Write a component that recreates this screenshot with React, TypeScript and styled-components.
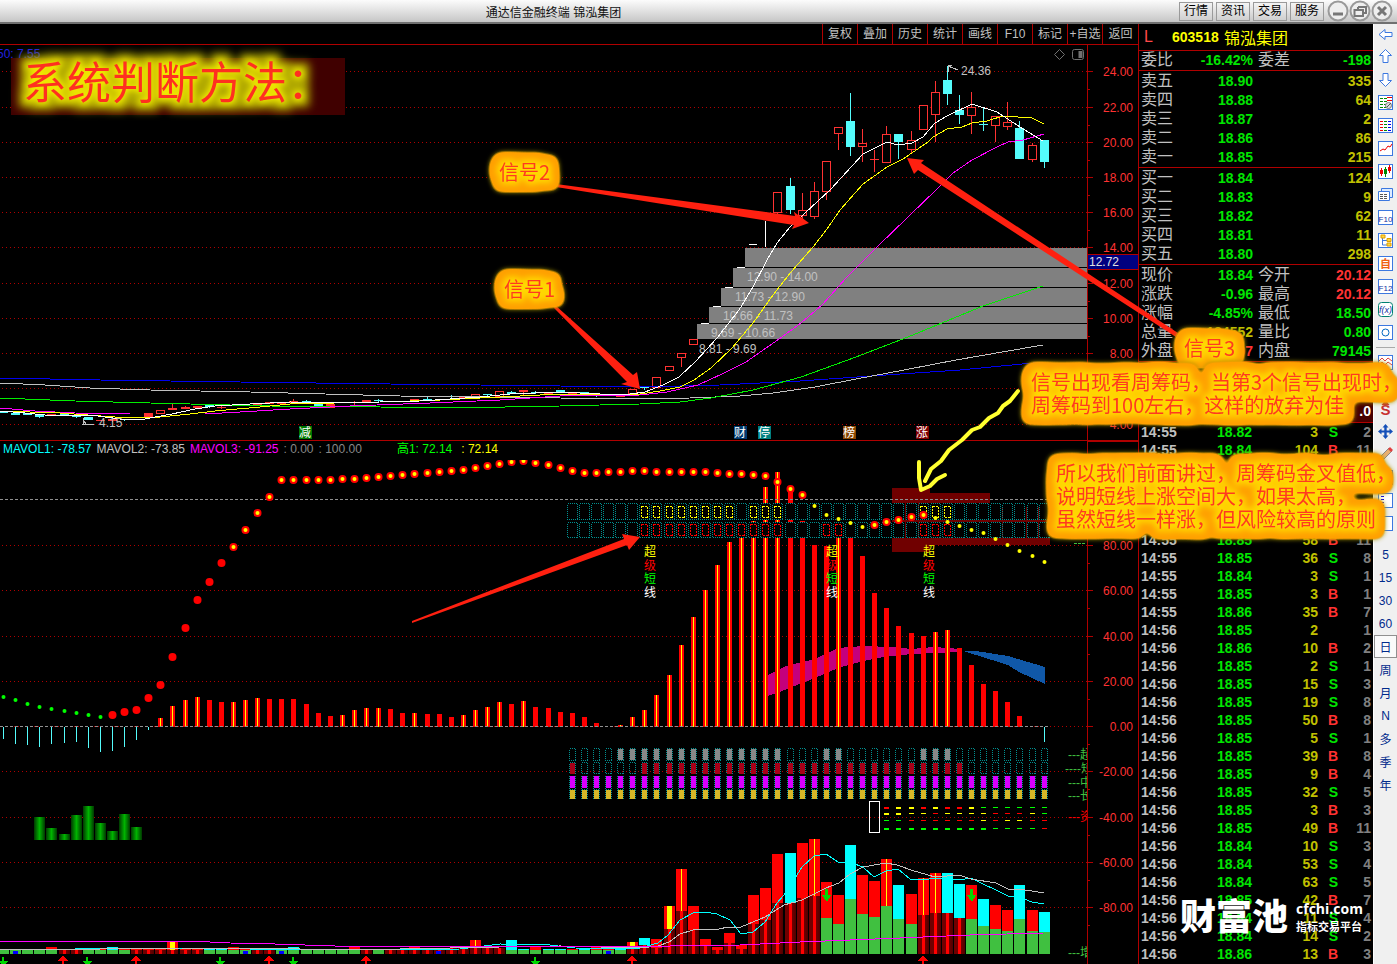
import React from "react";
import styled, { createGlobalStyle } from "styled-components";

const RED = "#b00000";
const UP = "#ff3232";
const DOWN = "#54fcfc";
const GREEN = "#00e600";
const OLIVE = "#c0c000";
const SILVER = "#c0c0c0";

const Global = createGlobalStyle`
  * { box-sizing: border-box; }
  body { margin: 0; background: #000; overflow-x: hidden; }
  button { font: inherit; padding: 0; margin: 0; cursor: default; }
`;

const Page = styled.div`
  position: relative;
  overflow: hidden;
  background: #000;
  color: ${SILVER};
  font: 12px "Liberation Sans", "Noto Sans CJK SC", sans-serif;
`;

const Header = styled.header`
  display: flex;
  align-items: center;
  height: 24px;
  padding: 0 4px 0 0;
  background: linear-gradient(#fcfcfc, #c6c6c6);
  border-bottom: 2px solid #707070;
  color: #111;
`;
const Caption = styled.h1`
  flex: 1;
  margin: 0;
  padding-right: 72px;
  text-align: center;
  font-size: 12px;
  font-weight: 400;
`;
const HeaderButtons = styled.div`
  display: flex;
  gap: 3px;
  margin-right: 3px;
`;
const HeaderButton = styled.button`
  width: 34px;
  height: 19px;
  border: 1px solid #9a9a9a;
  background: linear-gradient(#f4f4f4, #cfcfcf);
  line-height: 17px;
`;
const RoundButton = styled.button`
  width: 22px;
  height: 22px;
  border: 0;
  background: none;
  svg { display: block; }
`;

const Body = styled.main`
  display: flex;
  align-items: stretch;
`;
const Charts = styled.section`
  flex: 1;
  min-width: 0;
  svg { display: block; width: 100%; height: auto; }
`;
const Toolbar = styled.nav`
  display: flex;
  justify-content: flex-end;
  height: 21px;
  border-bottom: 1px solid ${RED};
`;
const ToolButton = styled.button<{ $wide?: boolean }>`
  width: ${(p) => (p.$wide ? 36 : 35)}px;
  border: 0;
  border-left: 1px solid ${RED};
  background: none;
  color: ${SILVER};
  line-height: 19px;
  white-space: nowrap;
`;
const Legend = styled.div`
  display: flex;
  height: 19px;
  border-top: 1px solid ${RED};
`;
const LegendItems = styled.div`
  display: flex;
  flex: 1;
  gap: 5px;
  padding-left: 3px;
  line-height: 17px;
  white-space: nowrap;
`;
const LegendItem = styled.span<{ $c: string; $gap?: number }>`
  color: ${(p) => p.$c};
  margin-left: ${(p) => p.$gap || 0}px;
`;
const AxisCap = styled.div`
  width: 51px;
  border: solid ${RED};
  border-width: 1px 0 0 1px;
`;

const Quotes = styled.aside`
  position: relative;
  width: 235px;
  border-left: 1px solid ${RED};
  font-size: 16px;
`;
const Stock = styled.div`
  display: flex;
  align-items: center;
  height: 26px;
  padding-left: 5px;
  color: #ff0;
  b { width: 28px; color: #ff4848; font-weight: 400; }
  strong { width: 52px; font-size: 14px; }
`;
const Group = styled.div<{ $tight?: boolean }>`
  border-top: 1px solid ${RED};
  padding-top: ${(p) => (p.$tight ? 0 : 1)}px;
`;
const QuoteRow = styled.div`
  display: grid;
  grid-template-columns: 34px 78px 38px 1fr;
  height: 19px;
  line-height: 18px;
  padding: 0 2px;
  white-space: nowrap;
  span:nth-child(3) { padding-left: 5px; }
`;
const Num = styled.b<{ $c: string }>`
  color: ${(p) => p.$c};
  font-size: 14px;
  text-align: right;
`;
const LargeRow = styled.div`
  height: 21px;
  margin-top: 38px;
  padding-right: 2px;
  background: #480000;
  color: #fff;
  text-align: right;
  font: bold 14px/20px "Liberation Sans", sans-serif;
`;
const Trades = styled.table`
  width: 100%;
  border-top: 1px solid ${RED};
  border-collapse: collapse;
  table-layout: fixed;
  font-size: 14px;
  font-weight: 700;
  td { height: 18px; padding: 0 2px; line-height: 18px; text-align: right; }
  td:first-child { text-align: left; }
`;
const Cell = styled.td<{ $c: string }>`
  color: ${(p) => p.$c};
`;
const Watermark = styled.div`
  position: absolute;
  left: 41px;
  bottom: 28px;
  display: flex;
  align-items: center;
  gap: 8px;
  color: #fff;
  font: 900 36px/44px "Noto Sans CJK SC", sans-serif;
  white-space: nowrap;
`;
const WatermarkSide = styled.div`
  padding-top: 5px;
  font: bold 11px/16px "Noto Sans CJK SC", sans-serif;
  div { font: bold 14px/18px "Open Sans", sans-serif; }
`;

const Side = styled.aside`
  width: 24px;
  background: #f0f0f0;
  border-left: 1px solid #fff;
  color: #002a8c;
`;
const SideButton = styled.button<{ $on?: boolean; $first?: boolean }>`
  display: flex;
  align-items: center;
  justify-content: center;
  width: 23px;
  height: ${(p) => (p.$first ? 21 : 23)}px;
  border: ${(p) => (p.$on ? "1px solid #909090" : "0")};
  background: ${(p) => (p.$on ? "#fafafa" : "none")};
  color: inherit;
`;
const Divider = styled.hr`
  height: 4px;
  margin: 0 2px 3px;
  border: 0;
  border-bottom: 1px solid #aaa;
`;
const Spacer = styled.div`
  height: 8px;
`;

const Overlay = styled.svg`
  position: absolute;
  left: 0;
  top: 0;
  width: 100%;
  pointer-events: none;
`;
const Note = styled.p<{ $x: number; $y: number }>`
  position: absolute;
  left: ${(p) => p.$x}px;
  top: ${(p) => p.$y}px;
  margin: 0;
  color: #ff3a20;
  font: 20px/23px "Noto Sans CJK SC", sans-serif;
  white-space: pre;
  filter: url(#bubble);
`;
const Banner = styled.div`
  position: absolute;
  left: 11px;
  top: 58px;
  width: 334px;
  height: 57px;
  background: #400000;
`;
const BannerText = styled.h2`
  margin: 0;
  padding-left: 12px;
  color: #ff3020;
  font: 400 44px/44px "Noto Sans CJK SC", sans-serif;
  white-space: nowrap;
  filter: url(#halo);
`;

const bx = (i: number) => Math.round(3 + 12.1 * i);
const seq = (a: number, b: number) => Array.from({ length: b - a + 1 }, (_, k) => a + k);

/* index, colour, body top, body bottom, wick top, wick bottom */
const candles: [number, "u" | "d" | "f", number, number, number, number][] = [
  [0, "d", 411, 413, 411, 413], [1, "d", 413, 415, 413, 415], [2, "d", 413, 415, 413, 415], [3, "d", 415, 417, 415, 418],
  [4, "f", 414, 416, 414, 416], [5, "d", 414, 415, 413, 415], [6, "d", 416, 417, 415, 418], [7, "d", 417, 420, 417, 420],
  [8, "f", 420, 421, 420, 421], [9, "f", 419, 421, 419, 422], [10, "d", 419, 420, 419, 421], [11, "f", 417, 418, 417, 418],
  [12, "f", 413, 417, 413, 417], [13, "u", 410, 413, 410, 414], [14, "f", 408, 410, 404, 410], [15, "f", 407, 409, 406, 409],
  [16, "f", 406, 408, 406, 408], [17, "d", 405, 407, 404, 408], [18, "f", 407, 408, 406, 409], [20, "f", 404, 405, 404, 405],
  [21, "f", 403, 405, 403, 405], [22, "f", 402, 404, 402, 404], [23, "f", 402, 404, 402, 404], [24, "f", 401, 403, 399, 403],
  [25, "d", 401, 404, 400, 404], [26, "d", 404, 406, 404, 406], [27, "f", 404, 408, 404, 408], [29, "f", 402, 403, 401, 405],
  [30, "f", 400, 402, 400, 402], [31, "d", 400, 401, 399, 402], [34, "f", 399, 401, 399, 401], [35, "d", 399, 400, 397, 400],
  [37, "d", 399, 400, 395, 400], [38, "f", 397, 399, 397, 399], [39, "u", 394, 397, 394, 398], [40, "d", 394, 395, 394, 397],
  [41, "u", 391, 396, 391, 396], [42, "d", 392, 394, 391, 394], [43, "f", 390, 392, 390, 395], [44, "d", 392, 393, 391, 394],
  [45, "f", 392, 394, 392, 394], [46, "d", 390, 393, 390, 393], [47, "f", 393, 395, 393, 395], [48, "d", 392, 395, 392, 395],
  [49, "d", 394, 396, 394, 397], [50, "f", 394, 396, 394, 396], [51, "f", 395, 397, 395, 397], [52, "u", 389, 393, 389, 393],
  [53, "d", 387, 388, 387, 390], [54, "u", 377, 387, 377, 388], [55, "u", 366, 370, 366, 370], [56, "u", 353, 357, 353, 367],
  [57, "u", 339, 344, 339, 344], [64, "u", 192, 212, 192, 215], [65, "d", 186, 210, 178, 214], [66, "u", 210, 215, 193, 219],
  [67, "u", 191, 216, 182, 219], [68, "u", 161, 191, 161, 200], [69, "u", 127, 133, 127, 150], [70, "d", 121, 147, 93, 156],
  [71, "u", 143, 146, 129, 162], [72, "f", 159, 160, 150, 172], [73, "u", 134, 162, 126, 163], [74, "d", 134, 142, 134, 159],
  [75, "u", 140, 149, 131, 153], [76, "u", 105, 129, 105, 130], [77, "u", 92, 114, 81, 142], [78, "d", 80, 94, 66, 105],
  [79, "d", 110, 115, 95, 124], [80, "u", 107, 115, 92, 134], [81, "d", 124, 125, 107, 131], [82, "u", 116, 125, 116, 142],
  [83, "u", 122, 126, 102, 130], [84, "d", 128, 159, 121, 159], [85, "u", 145, 159, 143, 162], [86, "d", 140, 162, 140, 168],
];

const priceLines: [string, string][] = [
  ["#00e", "0,378 100,380 240,382 390,384 480,385 560,386 640,387 720,385 800,381 900,374 960,370 1043,362"],
  [SILVER, "0,383 45,385 90,388 150,390 250,392 400,396 560,398 640,399 690,398 740,396 773,393 815,387 856,379 904,370 956,360 1008,351 1043,345"],
  ["#0e0", "0,398 75,401 150,403 270,406 380,407 450,408 560,406 640,404 680,402 711,398 753,390 801,377 856,357 908,337 983,306 1043,286"],
  ["#f0f", "0,408 35,411 75,413 130,414 205,414 240,412 290,409 350,406 430,403 500,400 560,396 640,395 667,392 698,385 722,374 746,362 779,339 801,323 822,305 846,278 877,247 908,217 937,189 953,173 972,160 997,147 1008,142 1023,140 1044,134"],
  ["#ff0", "0,411 60,413 115,417 160,417 190,414 215,411 260,407 290,404 380,402 440,400 500,397 560,394 640,394 660,391 680,387 694,380 711,368 732,348 753,323 773,295 791,272 813,247 827,229 840,210 863,184 887,167 903,159 928,142 933,137 947,129 962,127 972,123 987,121 1003,116 1032,118 1044,124"],
  ["#fff", "0,411 25,413 45,415 90,415 120,419 145,419 155,417 172,414 195,409 215,406 250,404 290,402 330,403 380,402 420,401 480,397 510,394 560,392 600,394 630,394 645,392 663,385 679,377 696,361 717,338 739,310 753,287 767,260 777,243 790,227 805,213 830,190 863,154 887,142 898,145 912,143 923,137 935,123 947,116 972,104 997,112 1020,127 1043,141"],
];

const bands: [number, number, number, string][] = [
  [745, 248, 19, "12.90 - 14.00"], [733, 268, 19, "11.73 - 12.90"], [721, 288, 18, "10.66 - 11.73"],
  [709, 307, 16, "9.69 - 10.66"], [697, 324, 15, "8.81 - 9.69"],
];
const bandLabelY = [281, 301, 320, 337, 353];
const badges: [number, string, string][] = [
  [305, "减", "#007800"], [740, "财", "#003a70"], [764, "停", "#008080"], [849, "榜", "#8a4600"], [922, "涨", "#800000"],
];

function Grid({ ys }: { ys: number[] }) {
  return <>{ys.map((y) => <line key={y} x1="2" x2="1087" y1={y + 0.5} y2={y + 0.5} stroke={RED} strokeDasharray="1 3" />)}</>;
}
function Axis({ items, from, to }: { items: [number, string][]; from: number; to: number }) {
  return (
    <>
      <line x1="1087.5" x2="1087.5" y1={from} y2={to} stroke={RED} />
      {items.map(([y, t]) => (
        <g key={t}>
          <path d={`M1088 ${y + 0.5}h5M1088 ${y + 18.5}h2`} stroke={RED} />
          <text x="1133" y={y + 5} textAnchor="end" fill={UP}>{t}</text>
        </g>
      ))}
    </>
  );
}

function PriceChart() {
  const ticks: [number, string][] = [71, 107, 142, 177, 212, 247, 283, 318, 353, 388, 424].map((y, k) => [y, (24 - 2 * k).toFixed(2)]);
  return (
    <svg viewBox="0 45 1138 395" fontSize="12" shapeRendering="crispEdges">
      <Grid ys={ticks.map((t) => t[0])} />
      <Axis items={ticks} from={45} to={440} />
      {bands.map(([x, y, h]) => <rect key={x} x={x} y={y} width={1087 - x} height={h} fill="#808080" />)}
      {bands.map(([x, , , t], k) => <text key={t} x={x + 2} y={bandLabelY[k]} fill={SILVER}>{t}</text>)}
      {candles.map(([i, k, t, b, wt, wb]) => {
        const x = bx(i);
        const c = k === "d" ? DOWN : UP;
        return (
          <g key={i} fill={c}>
            {wt < t && <rect x={x} y={wt} width="1" height={t - wt} />}
            {wb > b && <rect x={x} y={b} width="1" height={wb - b} />}
            {k === "u"
              ? <rect x={x - 3.5} y={t + 0.5} width="8" height={b - t} fill="#000" stroke={c} />
              : <rect x={x - 4} y={t} width="9" height={b - t} />}
          </g>
        );
      })}
      <path d="M765.5 221V247M749 244.5h8M737 267.5h8M725 287.5h8M713 306.5h8M701 323.5h8" stroke="#fff" />
      {priceLines.map(([c, p]) => <polyline key={c} points={p} fill="none" stroke={c} />)}
      <path d="M948 72V65h4M948 66l10 4M82 424h12M83 424v-6M83 420l4 5" stroke={SILVER} fill="none" />
      <text x="961" y="75" fill={SILVER}>24.36</text>
      <text x="99" y="427" fill={SILVER}>4.15</text>
      <text x="-3" y="58" fill="#2020e0">50: 7.55</text>
      {badges.map(([x, t, c]) => (
        <g key={t}>
          <rect x={x - 6} y="426" width="13" height="13" fill={c} />
          <text x={x} y="437" textAnchor="middle" fill="#fff">{t}</text>
        </g>
      ))}
      <g fill="none" stroke="#707070" shapeRendering="auto">
        <path d="M1059.500 49.500l5 5-5 5-5-5z" />
        <rect x="1072.500" y="49.500" width="11" height="10" rx="2" />
        <path d="M1080.500 51v7" strokeWidth="4" />
      </g>
      <rect x="1088" y="254" width="50" height="16" fill="#000080" />
      <path d="M1088 254.500h50M1088 269.500h50" stroke={RED} />
      <text x="1089" y="266" fill="#e0e0e0">12.72</text>
    </svg>
  );
}

const hist = [739, 744, 745, 747, 744, 743, 742, 748, 752, 751, 747, 740, 730, 718, 706, 700, 697, 700, 702, 702, 700, 698, 699, 699, 699, 704, 713, 716, 715, 710, 708, 708, 709, 713, 713, 714, 714, 717, 715, 710, 707, 702, 704, 701, 707, 708, 712, 713, 717, 723, 727, 725, 717, 710, 695, 675, 645, 617, 590, 565, 542, 537, 521, 487, 472, 489, 521, 545, 546, 537, 538, 556, 593, 608, 626, 633, 636, 632, 630, 648, 665, 684, 691, 702, 716, 727, 742];
const rising = new Set([13, 14, 15, 16, 19, 20, 21, 28, 29, 30, 31, 34, 38, 39, 40, 41, 43, ...seq(51, 64), 69, 77, 78]);
const dots = [697, 700, 704, 707, 709, 711, 713, 715, 717, 715, 712, 710, 698, 685, 657, 628, 600, 582, 563, 547, 530, 513, 497, 480, 480, 480, 480, 480, 479, 479, 478, 477, 476, 475, 474, 473, 472, 471, 470, 468, 466, 464, 462, 461, 463, 465, 468, 471, 473, 473, 472, 472, 471, 471, 472, 472, 472, 472, 472, 473, 474, 474, 475, 476, 482, 489, 495, 506, 515, 519, 523, 527, 525, 522, 520, 517, 515, 518, 522, 526, 530, 533, 539, 545, 551, 556, 562];
const active = [...seq(53, 60), 62, 63, 64, 76, 77, 78];
const activeLow = [...seq(53, 64), 68, 69, 76, 77, 78];
const greyCells = new Set([...seq(51, 64), 68, 69, 76, 77, 78]);

/* index, body colour, top, lower part colour (d = dark red, g = green), lower part top, yellow mark width */
const vols: [number, "r" | "c", number, "d" | "g", number, number?][] = [
  [52, "r", 942, "d", 948, 5], [53, "c", 938, "d", 945], [54, "r", 939, "d", 948], [55, "r", 906, "d", 929, 5], [56, "r", 869, "d", 911, 1],
  [57, "r", 906, "d", 930], [58, "r", 939, "d", 946], [59, "r", 947, "d", 950], [60, "r", 933, "d", 943], [61, "r", 945, "d", 949],
  [62, "r", 895, "d", 924], [63, "r", 888, "d", 920], [64, "r", 854, "d", 903], [65, "c", 853, "d", 903], [66, "r", 843, "d", 898],
  [67, "r", 839, "d", 896, 1], [68, "r", 882, "g", 918], [69, "r", 895, "g", 924], [70, "c", 845, "g", 899], [71, "r", 875, "g", 914],
  [72, "r", 881, "g", 917], [73, "r", 859, "g", 906, 1], [74, "c", 885, "g", 919], [75, "r", 894, "g", 924], [76, "r", 878, "d", 915, 1],
  [77, "r", 873, "d", 913, 1], [78, "c", 873, "d", 913], [79, "c", 884, "d", 918], [80, "r", 885, "g", 919], [81, "c", 899, "g", 926],
  [82, "r", 905, "g", 929], [83, "r", 910, "g", 931], [84, "c", 885, "g", 919], [85, "r", 910, "g", 931], [86, "c", 912, "g", 932],
];
const lowKinds = "ggcggddggggddddddcgggddgggggggdcddddddddddccggcgcggg";
lowKinds.split("").forEach((k, i) => {
  const tall = i === 14 ? 942 : i === 39 || i === 42 ? 940 : i % 5 === 4 ? 947 : 949;
  vols.push([i, k === "c" || (k === "g" && i % 3 === 0) || i === 42 ? "c" : "r", tall, k === "d" ? "d" : "g", i > 36 && k === "d" ? 948 : 950, i === 14 ? 5 : i === 39 ? 1 : undefined]);
});

const dashRows: [number, string][] = [[808, "RYYRYRRYGGGGGG"], [814, "YYYYRYYYYRRRYG"], [821, "GGRRRRRRYRYYRR"], [829, "GGGGGGGGGGGGGR"]];
const dashColor: Record<string, string> = { R: "#f00", Y: "#ff0", G: "#0f0" };
const stacks = [650, 832, 929];
const stackText: [string, string, number][] = [["超", "#ff0", 556], ["级", "#f00", 570], ["短", "#0f0", 583], ["线", "#fff", 597]];
const greens = [817, 828, 834, 815, 806, 823, 831, 814, 827];
const tags: [number, string, string][] = [[759, "---超", "#40c040"], [773, "----短", "#40c040"], [787, "---中", "#40c040"], [800, "---长", "#40c040"], [821, "---资", "#f00"], [957, "---增", "#40c040"]];

function Dot({ i, y }: { i: number; y: number }) {
  const x = bx(i) + 0.5;
  const small = i < 9 || (i > 66 && i < 72) || i > 76;
  if (small) return <circle cx={x} cy={y} r="2" fill={i < 9 ? "#0f0" : "#ff0"} />;
  return (
    <>
      <circle cx={x} cy={y} r="4" fill="#f00" />
      {i > 18 && <circle cx={x} cy={y} r="2" fill="#ff0" />}
    </>
  );
}

function IndicatorChart() {
  const ticks: [number, string][] = [545, 590, 636, 681, 726, 771, 817, 862, 907].map((y, k) => [y, (80 - 20 * k).toFixed(2)]);
  return (
    <svg viewBox="0 459 1138 505" fontSize="12" shapeRendering="crispEdges">
      <defs>
        <linearGradient id="darkBar">
          <stop offset="0" stopColor="#700000" /><stop offset=".38" stopColor="#700000" /><stop offset=".38" stopColor="#f00" />
          <stop offset=".65" stopColor="#f00" /><stop offset=".65" stopColor="#700000" /><stop offset="1" stopColor="#500000" />
        </linearGradient>
        <linearGradient id="greenBar">
          <stop offset="0" stopColor="#003800" /><stop offset=".5" stopColor="#00b400" /><stop offset="1" stopColor="#003800" />
        </linearGradient>
        <clipPath id="plot"><rect x="0" y="460" width="1087" height="504" /></clipPath>
      </defs>
      <Grid ys={ticks.map((t) => t[0])} />
      <Axis items={ticks} from={459} to={964} />
      <g clipPath="url(#plot)">
        <path d="M768 675L786 666 815 659 838 648 863 646 893 647 911 649 934 647 961 649V652L911 654 884 657 863 661 838 668 815 678 782 691 768 696z" fill="#c4007c" />
        <path d="M963 651L976 651 1008 656 1045 667V684L1019 672 1008 665 976 655z" fill="#1058a8" />
        {hist.map((y, i) => {
          const x = bx(i);
          if (y === 727) return null;
          if (i < 13 || i === 86) return <rect key={i} x={x} y="727" width="1" height={y - 727} fill={DOWN} />;
          return (
            <g key={i}>
              <rect x={x - 2} y={y} width="5" height={727 - y} fill="#f00" />
              {rising.has(i) && <rect x={x} y={y} width="1" height={727 - y} fill="#ff0" />}
            </g>
          );
        })}
        <path d="M892 488h38v5h60v27h60v25h-120v7h-38z" fill="#700000" />
        <rect x="567" y="503" width="483" height="17" fill="#000" />
        <rect x="567" y="522" width="483" height="16" fill="#000" />
        <path d="M905.500 503v35M918.500 503v35M1002.500 507v31M1026.500 507v31M1038.500 507v31" stroke="#700000" />
        {seq(47, 86).map((i) => (
          <g key={i} fill="none" stroke="#009090" strokeDasharray="1 1">
            <rect x={bx(i) - 4.5} y="503.500" width="10" height="16" />
            <rect x={bx(i) - 4.5} y="522.500" width="10" height="15" />
          </g>
        ))}
        {active.map((i) => <rect key={i} x={bx(i) - 2.5} y="506.500" width="6" height="11" fill="none" stroke="#ff0" strokeDasharray="2 1" />)}
        {activeLow.map((i) => <rect key={i} x={bx(i) - 2.5} y="524.500" width="6" height="11" fill="none" stroke="#f00" strokeDasharray="2 1" />)}
        <path d="M765.500 487v16M777.500 472v31" stroke="#f00" strokeWidth="5" />
        <path d="M765.500 487v16M777.500 472v31" stroke="#ff0" />
        <path d="M0 499.500H1050M0 726.500H1050" stroke="#909090" strokeDasharray="3 2" />
        <g shapeRendering="auto">{dots.map((y, i) => <Dot key={i} i={i} y={y} />)}</g>
        {stacks.map((x) => stackText.map(([t, c, y]) => <text key={x + t} x={x} y={y} textAnchor="middle" fill={c}>{t}</text>))}
        {seq(47, 86).map((i) => {
          const x = bx(i);
          return (
            <g key={i}>
              <g fill="none" stroke="#009090" strokeDasharray="1 1">
                <rect x={x - 2.5} y="748.500" width="6" height="12" />
                <rect x={x - 2.5} y="762.500" width="6" height="11" />
                <path d={`M${x - 2.5} 799V776M${x + 3.5} 799V776M${x - 2} 789.500h6`} />
              </g>
              {greyCells.has(i) && <rect x={x - 2} y="749" width="5" height="11" fill="#888" />}
              {(i === 47 || (i > 52 && i < 80)) && <rect x={x - 2} y="763" width="5" height="11" fill="#a80018" />}
              <rect x={x - 2} y="776" width="5" height="12" fill="#d800ff" />
              <rect x={x - 2} y="790" width="5" height="9" fill="#d8b828" />
            </g>
          );
        })}
        <rect x="869.500" y="801.500" width="10" height="31" fill="none" stroke="#fff" />
        {dashRows.map(([y, s]) => s.split("").map((c, k) => (
          <rect key={y + "-" + k} x={bx(73 + k) - 2} y={y - 1} width="5" height={(y === 808 && k < 8) || (y === 829 && k < 9) || (y === 814 && k < 2) ? 2 : 1} fill={dashColor[c]} />
        )))}
        {greens.map((y, k) => <rect key={k} x={bx(3 + k) - 5} y={y} width="11" height={840 - y} fill="url(#greenBar)" />)}
        {vols.map(([i, c, t, k, m, mark]) => {
          const x = bx(i);
          return (
            <g key={i}>
              <rect x={x - 5} y={t} width="11" height={m - t} fill={c === "r" ? "#f00" : "#0ff"} />
              <rect x={x - 5} y={m} width="11" height={954 - m} fill={k === "d" ? "url(#darkBar)" : "#40c040"} />
              {mark && <rect x={x - (mark > 1 ? 2 : 0)} y={t} width={mark} height={m - t} fill="#ff0" />}
            </g>
          );
        })}
        {[15, 245, 281, 438, 608].map((x) => <rect key={x} x={x - 2} y="951" width="5" height="3" fill="#00f" />)}
        <g fill="none">
          <polyline stroke="#0ff" points="0,949 60,950 90,948 200,948 300,950 400,950 460,949 500,944 550,945 575,948 620,949 640,948 658,943 668,935 680,920 693,913 705,912 717,914 730,920 741,934 753,932 765,922 777,903 784,895 795,878 802,867 814,856 826,854 838,862 852,863 863,867 874,877 886,871 898,869 910,879 923,880 935,878 959,880 971,878 983,884 996,890 1008,896 1019,897 1032,902 1044,904" />
          <polyline stroke={SILVER} points="0,949 100,949 180,948 300,949 400,949 500,947 560,946 600,947 640,948 658,946 669,942 680,934 693,930 719,929 728,927 741,927 753,922 765,917 784,905 802,900 826,888 839,883 850,874 863,867 886,863 897,865 911,870 935,877 959,875 971,879 996,883 1008,889 1019,889 1044,893" />
          <polyline stroke="#f0f" points="0,941 190,941 230,943 275,944 335,946 560,946 670,946 740,945 800,942 900,938 970,935 1044,933" />
        </g>
        {[826, 971].map((x) => <path key={x} d={`M${x - 1} 889h3v6h3l-4 7-5-7h3z`} fill="#00d800" />)}
        {[63, 136, 269, 366, 632, 923].map((x) => <path key={x} d={`M${x} 955l5 6h-4v3h-2v-3h-4z`} fill="#f00" />)}
        {[3, 87, 220, 293, 535].map((x) => <path key={x} d={`M${x - 1} 957h2v4h4l-4 5-6-5h4z`} fill="#00d800" />)}
        {tags.map(([y, t, c]) => <text key={y} x={t.length > 4 ? 1065 : 1068} y={y} fill={c}>{t}</text>)}
        <path d="M1074 543.500h12" stroke="#40c040" strokeDasharray="3 1" />
      </g>
    </svg>
  );
}

const asks: [string, string, string][] = [["卖五", "18.90", "335"], ["卖四", "18.88", "64"], ["卖三", "18.87", "2"], ["卖二", "18.86", "86"], ["卖一", "18.85", "215"]];
const bids: [string, string, string][] = [["买一", "18.84", "124"], ["买二", "18.83", "9"], ["买三", "18.82", "62"], ["买四", "18.81", "11"], ["买五", "18.80", "298"]];
const stats: [string, string, string, string, string, string][] = [
  ["现价", "18.84", GREEN, "今开", "20.12", UP], ["涨跌", "-0.96", GREEN, "最高", "20.12", UP], ["涨幅", "-4.85%", GREEN, "最低", "18.50", GREEN],
  ["总量", "184552", OLIVE, "量比", "0.80", GREEN], ["外盘", "105407", UP, "内盘", "79145", GREEN],
];
const trades = `82 3 S 2|84 104 B 11|84 12 S 3|84 8 S 2|85 6 B 1|85 20 B 4|85 58 B 11|85 36 S 8|84 3 S 1|85 3 B 1|86 35 B 7|85 2 - 1|86 10 B 2|85 2 S 1|85 15 S 3|85 19 S 8|85 50 B 8|85 5 S 1|85 39 B 8|85 9 B 4|85 32 S 5|85 3 B 3|85 49 B 11|84 10 S 3|84 53 S 4|84 63 S 5|85 42 B 7|84 11 S 4|84 14 S 2|86 13 B 3`
  .split("|").map((r) => r.split(" "));

function Depth({ rows }: { rows: [string, string, string][] }) {
  return (
    <Group>
      {rows.map(([n, p, v]) => (
        <QuoteRow key={n}><span>{n}</span><Num $c={GREEN}>{p}</Num><span /><Num $c={OLIVE}>{v}</Num></QuoteRow>
      ))}
    </Group>
  );
}

const frame = <rect x="1.500" y="1.500" width="14" height="14" fill="#fff" stroke="#3c78e0" />;
const lines = (x: number, c: string) => <path d={`M${x} 4.500h3M${x} 7.500h3M${x} 10.500h3M${x} 13.500h3`} stroke={c} />;
const boxed = (t: string, c: string) => <>{frame}<text x="8.500" y="12.500" fontSize={t.length > 1 ? 8 : 11} fontWeight={t.length > 1 ? 400 : 700} textAnchor="middle" fill={c}>{t}</text></>;
const sideIcons: [string, React.ReactNode][] = [
  ["后退", <path d="M2 8.500l6-5v3h7v4H8v3z" fill="#fff" stroke="#3c78e0" />],
  ["上移", <path d="M8.500 1.500l6 6h-3.500v7H6V7.500H2.500z" fill="#fff" stroke="#3c78e0" />],
  ["下移", <path d="M8.500 15.500l6-6h-3.500v-7H6v7H2.500z" fill="#fff" stroke="#3c78e0" />],
  ["行情表", <>{frame}{lines(3, "#080")}{lines(7, "#080")}<path d="M10 3.500h5M10 6.500h5" stroke="#e00" /><circle cx="11.500" cy="11.500" r="3" fill="#ddd" stroke="#777" /><path d="M10 13l4-4" stroke="#555" /></>],
  ["报价", <>{frame}{lines(3, "#e00")}{lines(7, "#080")}{lines(11, "#00e")}</>],
  ["分时", <>{frame}<path d="M3 11l3-2 2 1 3-4 2 1 2-3" fill="none" stroke="#e00" /></>],
  ["K线", <>{frame}<path d="M4.500 5v8M12.500 2v8" stroke="#e00" /><path d="M8.500 4v10" stroke="#080" /><path d="M3 7h3v4H3zM11 4h3v4h-3z" fill="#e00" /><path d="M7 6h3v5H7z" fill="#080" /></>],
  ["多窗", <><path d="M4.500 2.500h11v9h-11z" fill="#dcecff" stroke="#3c78e0" /><path d="M1.500 5.500h11v9h-11z" fill="#fff" stroke="#3c78e0" /><path d="M3 8.500h8M3 10.500h8M3 12.500h8" stroke="#555" strokeDasharray="3 1" /></>],
  ["F10", boxed("F10", "#1030a0")],
  ["板块", <>{frame}<path d="M5.500 6v7h5M5.500 8.500h5" fill="none" stroke="#3c78e0" /><path d="M4 3h4v3H4zM10 6.500h4v3h-4zM10 11h4v3h-4z" fill="#ffd840" stroke="#e0a000" /></>],
  ["自选股", boxed("自", "#f06010")],
  ["F12", boxed("F12", "#1030a0")],
  ["公式", <><rect x="1.500" y="1.500" width="14" height="14" rx="3" fill="#fff" stroke="#008070" /><text x="8.500" y="12" fontSize="9" fontStyle="italic" textAnchor="middle" fill="#1030a0">f(x)</text></>],
  ["圆圈", <>{frame}<circle cx="8.500" cy="8.500" r="3.500" fill="none" stroke="#0068c0" /></>],
];
const moreIcons: [string, React.ReactNode][] = [
  ["走势", <>{frame}<path d="M2 7l3-3 3 3 3-3 4 3M2 11l3-3 3 3 3-3 4 3" fill="none" stroke="#e04040" /></>],
  ["报表", boxed("A", "#1030a0")],
  ["资金", <><path d="M8.500 0l4 5h-8z" fill="#c83030" /><text x="8.500" y="15" fontSize="15" fontWeight="700" textAnchor="middle" fill="#c83030">S</text></>],
  ["移动", <path d="M8.500 1l3 3.500H9.700V7.500H12.500V5.500L16 8.500l-3.500 3V9.500H9.700v3h1.800L8.500 16l-3-3.500h1.800v-3H4.500v2L1 8.500l3.500-3v2h2.800v-3H5.500z" fill="#1450b8" />],
  ["画笔", <><path d="M3 14l1-4 8-8 3 3-8 8z" fill="#e8b070" stroke="#888" /><path d="M11 3l2-2 3 3-2 2z" fill="#e04040" /></>],
  ["窗口", frame],
  ["列表", <>{frame}{lines(4, "#00e")}</>],
  ["设置", frame],
];

function App() {
  return (
    <Page>
      <Global />
      <Header>
        <Caption>通达信金融终端 锦泓集团</Caption>
        <HeaderButtons>{["行情", "资讯", "交易", "服务"].map((t) => <HeaderButton key={t}>{t}</HeaderButton>)}</HeaderButtons>
        {[["最小化", "M6 14h10"], ["还原", "M9 7h8v6h-3M9 7v3M5.500 10h8.500v6H5.500z"], ["关闭", "M7 7l8 8M15 7l-8 8"]].map(([n, d], k) => (
          <RoundButton key={n} aria-label={n}>
            <svg width="22" height="22" fill="none" stroke="#777"><circle cx="11" cy="11" r="9.500" strokeWidth="2" stroke="#999" fill="#eee" /><path d={d} strokeWidth={k === 1 ? 2 : 3} /></svg>
          </RoundButton>
        ))}
      </Header>
      <Body>
        <Charts>
          <Toolbar>
            {["复权", "叠加", "历史", "统计", "画线", "F10", "标记", "+自选", "返回"].map((t, k) => <ToolButton key={t} $wide={k === 8}>{t}</ToolButton>)}
          </Toolbar>
          <PriceChart />
          <Legend>
            <LegendItems>
              <LegendItem $c="#0ff">MAVOL1: -78.57</LegendItem>
              <LegendItem $c={SILVER}>MAVOL2: -73.85</LegendItem>
              <LegendItem $c="#f0f">MAVOL3: -91.25</LegendItem>
              <LegendItem $c="#888">: 0.00</LegendItem>
              <LegendItem $c="#888">: 100.00</LegendItem>
              <LegendItem $c="#0f0" $gap={30}>高1: 72.14</LegendItem>
              <LegendItem $c="#ff0" $gap={4}>: 72.14</LegendItem>
            </LegendItems>
            <AxisCap />
          </Legend>
          <IndicatorChart />
        </Charts>
        <Quotes>
          <Stock><b>L</b><strong>603518</strong>锦泓集团</Stock>
          <Group $tight>
            <QuoteRow><span>委比</span><Num $c={GREEN}>-16.42%</Num><span>委差</span><Num $c={GREEN}>-198</Num></QuoteRow>
          </Group>
          <Depth rows={asks} />
          <Depth rows={bids} />
          <Group>
            {stats.map(([a, b, c, d, e, f]) => (
              <QuoteRow key={a}><span>{a}</span><Num $c={c}>{b}</Num><span>{d}</span><Num $c={f}>{e}</Num></QuoteRow>
            ))}
          </Group>
          <Group><LargeRow>.0</LargeRow></Group>
          <Trades>
            <colgroup><col width="58" /><col width="57" /><col width="66" /><col width="20" /><col /></colgroup>
            <tbody>
              {trades.map(([p, v, s, n], k) => (
                <tr key={k}>
                  <Cell $c={SILVER}>{k < 11 ? "14:55" : "14:56"}</Cell>
                  <Cell $c={GREEN}>18.{p}</Cell>
                  <Cell $c={OLIVE}>{v}</Cell>
                  <Cell $c={s === "B" ? UP : GREEN}>{s === "-" ? "" : s}</Cell>
                  <Cell $c="#808080">{n}</Cell>
                </tr>
              ))}
            </tbody>
          </Trades>
          <Watermark>
            财富池
            <WatermarkSide><div>cfchi.com</div>指标交易平台</WatermarkSide>
          </Watermark>
        </Quotes>
        <Side>
          {sideIcons.map(([n, g], k) => <SideButton key={n} aria-label={n} $first={k === 0}><svg width="17" height="17">{g}</svg></SideButton>)}
          <Divider />
          {moreIcons.map(([n, g]) => <SideButton key={n} aria-label={n}><svg width="17" height="17">{g}</svg></SideButton>)}
          <Spacer />
          {["5", "15", "30", "60", "日", "周", "月", "N", "多", "季", "年"].map((t) => <SideButton key={t} $on={t === "日"}>{t}</SideButton>)}
        </Side>
      </Body>
      <Banner><BannerText>系统判断方法：</BannerText></Banner>
      <Overlay viewBox="0 0 1397 964">
        <defs>
          <filter id="bubble" x="-50%" y="-100%" width="200%" height="300%" colorInterpolationFilters="sRGB">
            <feMorphology in="SourceAlpha" operator="dilate" radius="7" result="fat" />
            <feGaussianBlur in="fat" stdDeviation="4" result="soft" />
            <feComponentTransfer in="soft" result="shape"><feFuncA type="linear" slope="8" intercept="-1" /></feComponentTransfer>
            <feFlood floodColor="#ffa000" /><feComposite in2="shape" operator="in" result="orange" />
            <feGaussianBlur in="shape" stdDeviation="2" result="edge" />
            <feFlood floodColor="#a89800" /><feComposite in2="edge" operator="in" result="rim" />
            <feMorphology in="SourceAlpha" operator="dilate" radius="3" result="mid" />
            <feGaussianBlur in="mid" stdDeviation="3" result="midSoft" />
            <feFlood floodColor="#ffd800" /><feComposite in2="midSoft" operator="in" result="yellow" />
            <feMerge><feMergeNode in="rim" /><feMergeNode in="orange" /><feMergeNode in="yellow" /><feMergeNode in="SourceGraphic" /></feMerge>
          </filter>
          <filter id="halo" x="-20%" y="-60%" width="140%" height="220%" colorInterpolationFilters="sRGB">
            <feMorphology in="SourceAlpha" operator="dilate" radius="8" result="fat" />
            <feGaussianBlur in="fat" stdDeviation="4" result="soft" />
            <feFlood floodColor="#b0a800" /><feComposite in2="soft" operator="in" result="glow" />
            <feMorphology in="SourceAlpha" operator="dilate" radius="2" result="near" />
            <feGaussianBlur in="near" stdDeviation="3" result="nearSoft" />
            <feFlood floodColor="#f0e800" /><feComposite in2="nearSoft" operator="in" result="core" />
            <feMerge><feMergeNode in="glow" /><feMergeNode in="core" /><feMergeNode in="SourceGraphic" /></feMerge>
          </filter>
        </defs>
        <g fill="#ff2010">
          <path d="M556 184L795 216 794 212 809 223 792 229 794 225 556 187z" />
          <path d="M555 305L633 375 637 372 640 389 621 384 627 382 554 308z" />
          <path d="M907 158L924 160 921 163 1178 333 1176 337 918 170 914 174z" />
          <path d="M412 621L624 539 622 534 640 537 629 550 627 545 412 623z" />
        </g>
        <g fill="none" stroke="#ffff30" strokeWidth="4" strokeLinecap="round" strokeLinejoin="round">
          <path d="M1018 391L1010 401 1003 406 998 413 989 418 980 427 972 430 962 440 949 450 941 461 931 469 925 481" />
          <path d="M919 462L919 478 921 490 930 486 937 479 945 475" />
        </g>
      </Overlay>
      <Note $x={499} $y={160}>信号2</Note>
      <Note $x={504} $y={277}>信号1</Note>
      <Note $x={1184} $y={336}>信号3</Note>
      <Note $x={1031} $y={370}>{"信号出现看周筹码，当第3个信号出现时，\n周筹码到100左右，这样的放弃为佳"}</Note>
      <Note $x={1056} $y={461}>{"所以我们前面讲过，周筹码金叉值低，\n说明短线上涨空间大，如果太高，\n虽然短线一样涨，但风险较高的原则"}</Note>
    </Page>
  );
}

export default App;
